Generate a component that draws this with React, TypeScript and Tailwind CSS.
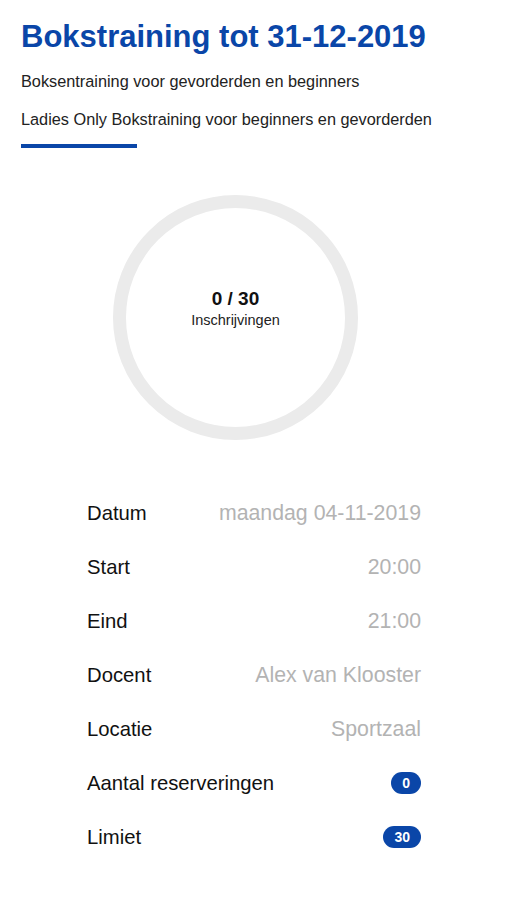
import React from 'react';

const rows: { label: string; value: string; badge?: boolean }[] = [
  { label: 'Datum', value: 'maandag 04-11-2019' },
  { label: 'Start', value: '20:00' },
  { label: 'Eind', value: '21:00' },
  { label: 'Docent', value: 'Alex van Klooster' },
  { label: 'Locatie', value: 'Sportzaal' },
  { label: 'Aantal reserveringen', value: '0', badge: true },
  { label: 'Limiet', value: '30', badge: true },
];

export default function App() {
  return (
    <div
      className="w-[507px] min-h-[900px] bg-white text-[#111]"
      style={{ fontFamily: '"Liberation Sans", Arial, sans-serif' }}
    >
      {/* Header */}
      <div className="px-[21px] pt-[19px]">
        <h1 className="text-[31px] leading-[36px] font-bold text-[#0a46a8]">
          Bokstraining tot 31-12-2019
        </h1>
        <p className="mt-[16px] text-[16.3px] leading-[20px] text-[#222]">
          Boksentraining voor gevorderden en beginners
        </p>
        <p className="mt-[18px] text-[16.3px] leading-[20px] text-[#222]">
          Ladies Only Bokstraining voor beginners en gevorderden
        </p>
        <div className="mt-[15px] h-[4px] w-[116px] bg-[#0a46a8]" />
      </div>

      {/* Progress ring */}
      <div className="mt-[47px] ml-[113px] relative w-[245px] h-[245px]">
        <svg width="245" height="245" viewBox="0 0 245 245">
          <circle cx="122.5" cy="122.5" r="116" fill="none" stroke="#ebebeb" strokeWidth="13" />
        </svg>
        <div className="absolute inset-0 flex flex-col items-center justify-center pb-[17px]">
          <span className="text-[19px] leading-[22px] font-bold text-[#111]">0 / 30</span>
          <span className="text-[14.5px] leading-[20px] text-[#222]">Inschrijvingen</span>
        </div>
      </div>

      {/* Details */}
      <div className="mt-[46px] pl-[87px] pr-[86px]">
        {rows.map((r) => (
          <div key={r.label} className="h-[54px] flex items-center justify-between">
            <span className="text-[20.3px] leading-[26px] text-[#111]">{r.label}</span>
            {r.badge ? (
              <span className="h-[22px] px-[11px] rounded-full bg-[#0a46a8] text-white text-[14px] font-bold flex items-center">
                {r.value}
              </span>
            ) : (
              <span className="text-[21.3px] leading-[26px] text-[#b3b3b3]">{r.value}</span>
            )}
          </div>
        ))}
      </div>
    </div>
  );
}
